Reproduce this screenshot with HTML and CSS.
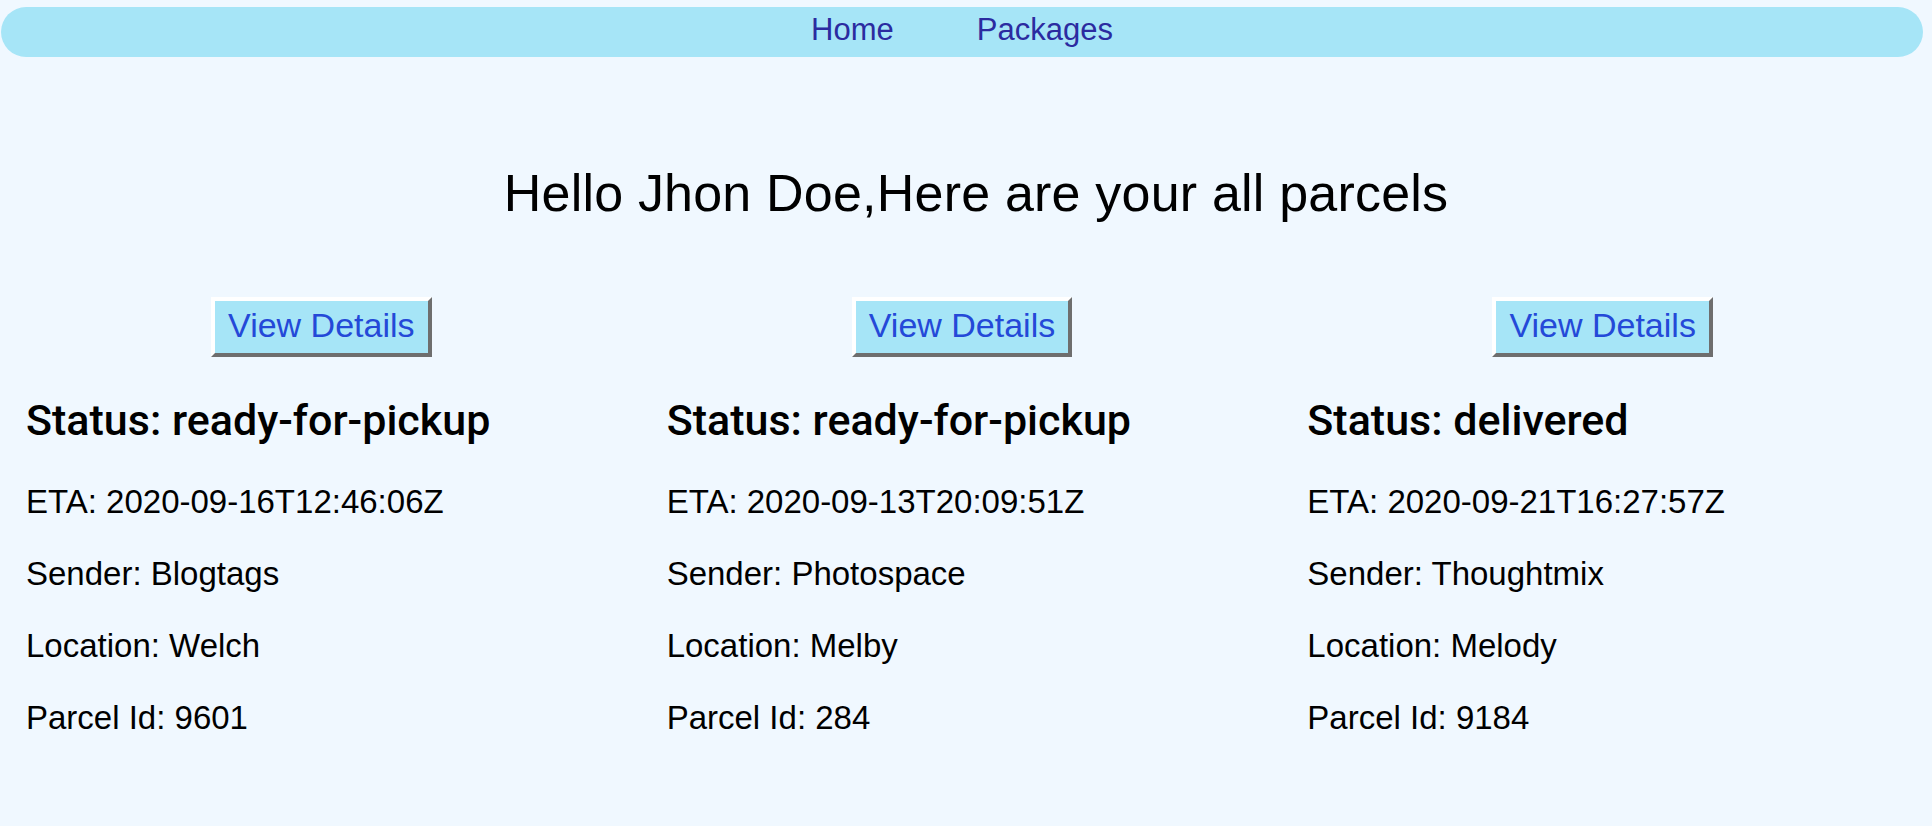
FILE: index.html
```html
<!DOCTYPE html>
<html lang="en">
<head>
<meta charset="utf-8">
<title>Parcels</title>
<link rel="stylesheet" href="styles.css">
</head>
<body>
<div class="page">
  <nav class="nav">
    <a class="nav-link" href="#">Home</a>
    <a class="nav-link" href="#">Packages</a>
  </nav>
  <h2 class="greeting">Hello Jhon Doe,Here are your all parcels</h2>
  <section class="parcels">
    <div class="parcel">
      <div class="parcel-action"><button class="details-btn" type="button">View Details</button></div>
      <h3 class="status">Status: ready-for-pickup</h3>
      <p class="field">ETA: 2020-09-16T12:46:06Z</p>
      <p class="field">Sender: Blogtags</p>
      <p class="field">Location: Welch</p>
      <p class="field">Parcel Id: 9601</p>
    </div>
    <div class="parcel">
      <div class="parcel-action"><button class="details-btn" type="button">View Details</button></div>
      <h3 class="status">Status: ready-for-pickup</h3>
      <p class="field">ETA: 2020-09-13T20:09:51Z</p>
      <p class="field">Sender: Photospace</p>
      <p class="field">Location: Melby</p>
      <p class="field">Parcel Id: 284</p>
    </div>
    <div class="parcel">
      <div class="parcel-action"><button class="details-btn" type="button">View Details</button></div>
      <h3 class="status">Status: delivered</h3>
      <p class="field">ETA: 2020-09-21T16:27:57Z</p>
      <p class="field">Sender: Thoughtmix</p>
      <p class="field">Location: Melody</p>
      <p class="field">Parcel Id: 9184</p>
    </div>
  </section>
</div>
</body>
</html>
```
FILE: styles.css
```css
html, body {
  margin: 0;
  padding: 0;
  background: #f0f8ff;
}

body {
  font-family: "Liberation Sans", Arial, sans-serif;
  color: #000;
}

.page {
  width: 1922px;
  margin-left: 1px;
  padding-top: 7px;
}

.nav {
  height: 50px;
  box-sizing: border-box;
  padding-bottom: 4px;
  border-radius: 25px;
  background: #a6e5f7;
  display: flex;
  justify-content: center;
  align-items: center;
  gap: 83px;
}

.nav-link {
  font-size: 31px;
  line-height: 46px;
  color: #2b2ba0;
  text-decoration: none;
}

.greeting {
  margin: 106px 0 0;
  padding-left: 28px;
  font-size: 52px;
  line-height: 60px;
  font-weight: 400;
  letter-spacing: 0.2px;
  text-align: center;
}

.parcels {
  display: grid;
  grid-template-columns: repeat(3, 1fr);
  margin-top: 74px;
}

.parcel {
  padding: 0 25px;
}

.parcel-action {
  display: flex;
  justify-content: center;
}

.details-btn {
  font-family: "Liberation Sans", Arial, sans-serif;
  font-size: 34px;
  line-height: 40px;
  color: #2449d8;
  background: #a6e5f7;
  padding: 4px 13px 8px;
  border: 4px solid;
  border-color: #ffffff #6e6e6e #6e6e6e #ffffff;
  cursor: pointer;
}

.status {
  margin: 39px 0 0;
  font-family: Roboto, "Liberation Sans", Arial, sans-serif;
  font-size: 43px;
  line-height: 48px;
  font-weight: 500;
}

.field {
  margin: 32px 0 0;
  font-size: 33px;
  line-height: 40px;
}

.status + .field {
  margin-top: 38px;
}
```
